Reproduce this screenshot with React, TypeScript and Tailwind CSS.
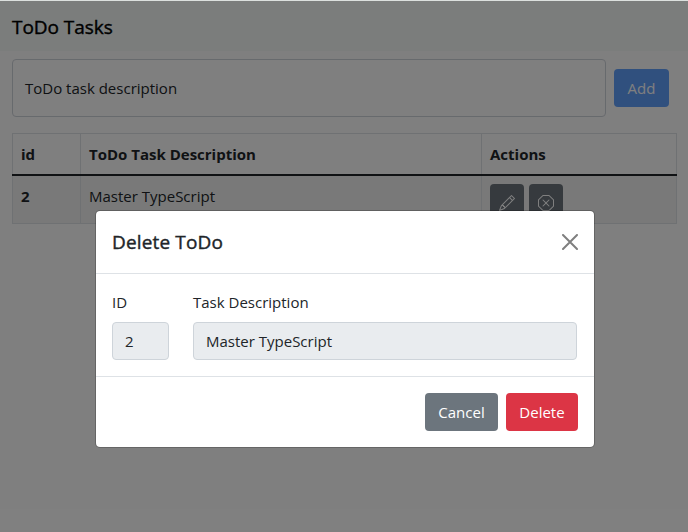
import type { ReactNode } from "react";
import { BsPencil, BsXOctagon } from "react-icons/bs";

function IconButton({ children, label }: { children: ReactNode; label: string }) {
  return (
    <button aria-label={label} className="flex h-[38px] w-[34px] items-center justify-center rounded bg-[#6c757d] text-white">
      {children}
    </button>
  );
}

function DeleteModal() {
  return (
    <div role="dialog" className="absolute left-[95px] top-[210px] flex h-[238px] w-[500px] flex-col rounded-[5px] border border-black/20 bg-white bg-clip-padding">
      <div className="flex h-[63px] items-center justify-between border-b border-[#dee2e6] px-4">
        <h5 className="text-[19px] font-medium leading-[30px] tracking-[0.15px] [-webkit-text-stroke:0.4px_currentColor]">Delete ToDo</h5>
        <button aria-label="Close" className="text-black/50">
          <svg width="16" height="16" viewBox="0 0 16 16" fill="none" stroke="currentColor" strokeWidth="2" strokeLinecap="round">
            <path d="M1 1l14 14M15 1L1 15" />
          </svg>
        </button>
      </div>
      <div className="flex h-[103px] gap-6 border-b border-[#dee2e6] px-4 pt-4">
        <div className="w-[57px]">
          <div className="mb-2 leading-6">ID</div>
          <div className="h-[38px] rounded border border-[#ced4da] bg-[#e9ecef] px-3 leading-9">2</div>
        </div>
        <div className="w-[384px]">
          <div className="mb-2 leading-6">Task Description</div>
          <div className="h-[38px] rounded border border-[#ced4da] bg-[#e9ecef] px-3 leading-9">Master TypeScript</div>
        </div>
      </div>
      <div className="flex flex-1 items-center justify-end gap-2 px-4 text-white">
        <button className="h-[38px] w-[73px] rounded bg-[#6c757d]">Cancel</button>
        <button className="h-[38px] w-[72px] rounded bg-[#dc3545]">Delete</button>
      </div>
    </div>
  );
}

export default function App() {
  return (
    <div className="relative h-[532px] w-[688px] overflow-hidden bg-white font-['Open_Sans',sans-serif] text-[15px] text-[#212529]">
      <header className="flex h-[51px] items-center border-t border-[#dce0de] bg-[#f6fbf8] px-3 pt-[2px]">
        <h1 className="text-[19px] font-medium leading-[30px] tracking-[-0.05px] text-black [-webkit-text-stroke:0.4px_currentColor]">ToDo Tasks</h1>
      </header>
      <main className="px-3 pt-2">
        <div className="flex items-center gap-2">
          <div className="flex h-[58px] w-[594px] items-center rounded border border-[#ced4da] px-3">ToDo task description</div>
          <button className="h-[38px] w-[55px] rounded bg-[#0d6efd] text-white opacity-65">Add</button>
        </div>
        <table className="mt-4 w-[665px] table-fixed border-collapse border border-[#dee2e6] text-left">
          <colgroup>
            <col className="w-[68px]" />
            <col className="w-[401px]" />
            <col />
          </colgroup>
          <thead>
            <tr className="h-[41px] border-b-2 border-[#212529]">
              <th className="border-x border-[#dee2e6] px-2 font-bold">id</th>
              <th className="border-x border-[#dee2e6] px-2 font-bold">ToDo Task Description</th>
              <th className="border-x border-[#dee2e6] px-2 font-bold">Actions</th>
            </tr>
          </thead>
          <tbody>
            <tr className="h-[49px] bg-[#f2f2f2] align-top leading-6">
              <th className="border-x border-[#dee2e6] px-2 pt-2 font-bold">2</th>
              <td className="border-x border-[#dee2e6] px-2 pt-2">Master TypeScript</td>
              <td className="border-x border-[#dee2e6] px-2 pt-2">
                <div className="flex h-[32px] gap-[5px]">
                  <IconButton label="Edit"><BsPencil size={16} /></IconButton>
                  <IconButton label="Delete"><BsXOctagon size={16} /></IconButton>
                </div>
              </td>
            </tr>
          </tbody>
        </table>
      </main>
      <div className="absolute inset-x-0 bottom-0 top-px bg-black/50" />
      <DeleteModal />
    </div>
  );
}
